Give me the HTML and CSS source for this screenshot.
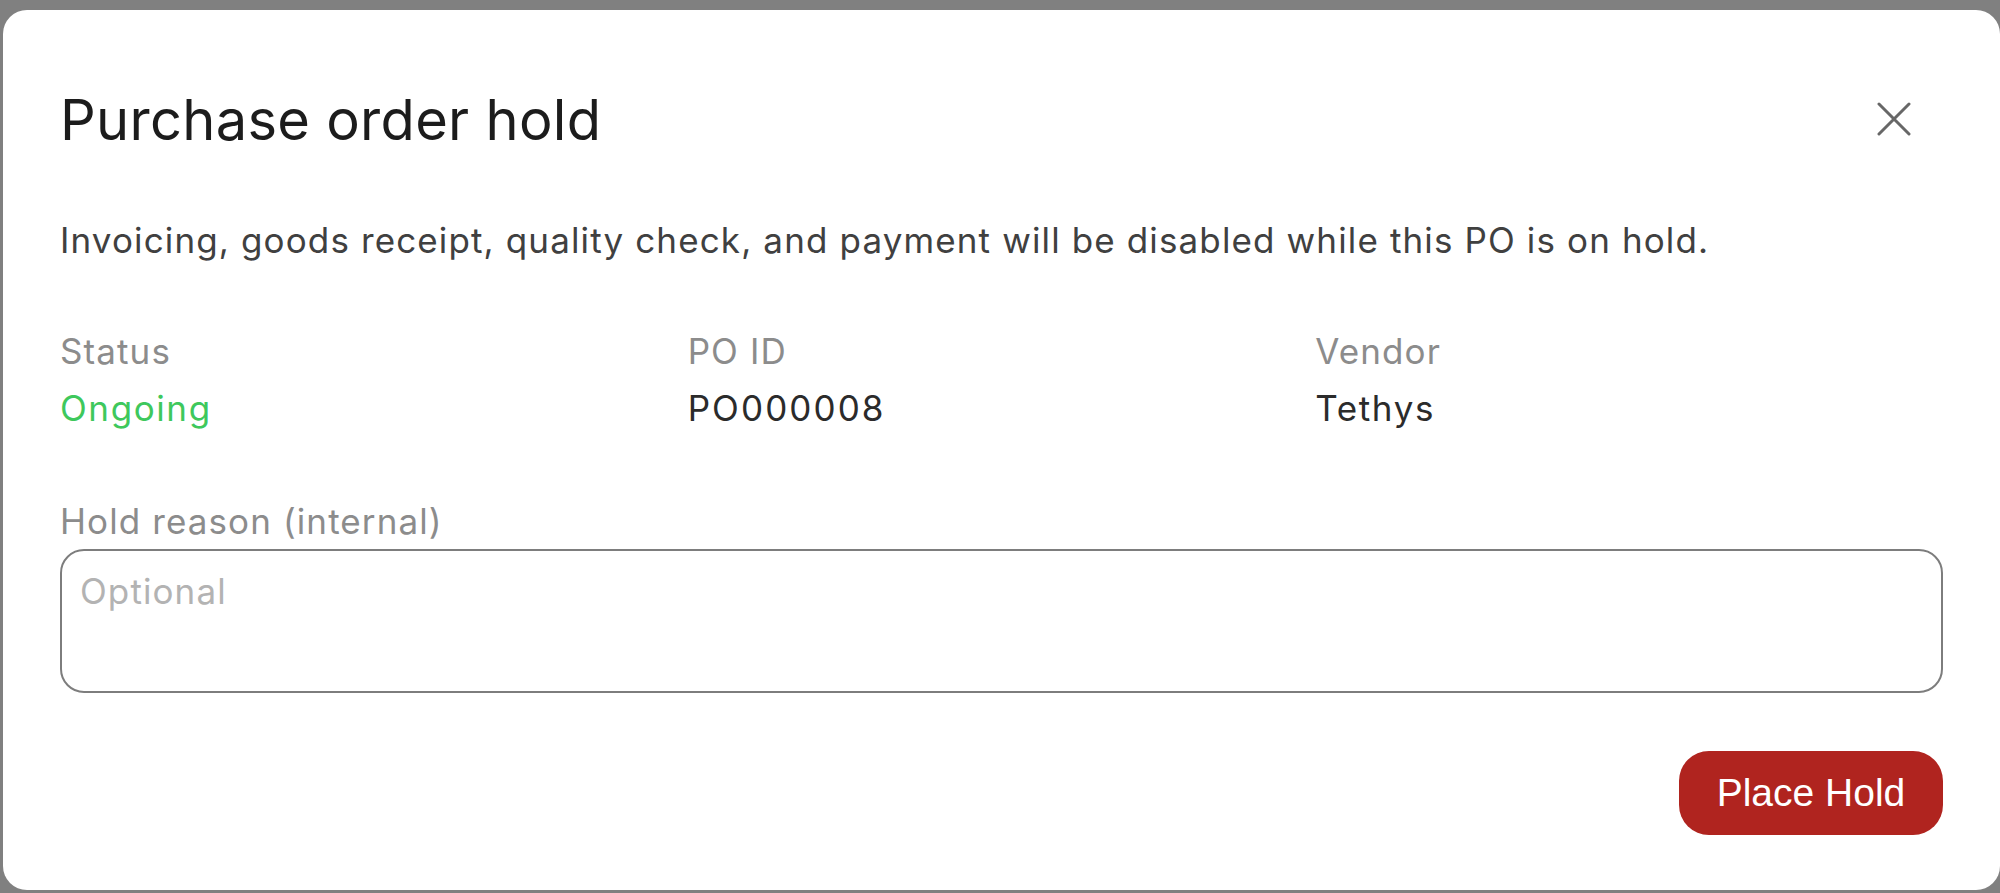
FILE: index.html
```html
<!DOCTYPE html>
<html lang="en">
<head>
<meta charset="utf-8">
<title>Purchase order hold</title>
<link rel="stylesheet" href="styles.css">
</head>
<body>
<div class="modal" role="dialog" aria-labelledby="modal-title">
  <div class="modal-header">
    <h1 class="modal-title" id="modal-title">Purchase order hold</h1>
    <button class="close-btn" type="button" aria-label="Close">
      <svg viewBox="0 0 34 34" width="34" height="34" aria-hidden="true">
        <path d="M2 2 L32 32 M32 2 L2 32" fill="none" stroke="#676767" stroke-width="3" stroke-linecap="round"/>
      </svg>
    </button>
  </div>
  <p class="modal-desc">Invoicing, goods receipt, quality check, and payment will be disabled while this PO is on hold.</p>
  <div class="meta">
    <div class="meta-item">
      <div class="meta-label">Status</div>
      <div class="meta-value status-ongoing">Ongoing</div>
    </div>
    <div class="meta-item">
      <div class="meta-label">PO ID</div>
      <div class="meta-value meta-code">PO000008</div>
    </div>
    <div class="meta-item">
      <div class="meta-label">Vendor</div>
      <div class="meta-value">Tethys</div>
    </div>
  </div>
  <label class="field-label" for="hold-reason">Hold reason (internal)</label>
  <textarea class="field-input" id="hold-reason" placeholder="Optional"></textarea>
  <div class="modal-footer">
    <button class="btn-danger" type="button">Place Hold</button>
  </div>
</div>
</body>
</html>
```

FILE: styles.css
```css
* {
  box-sizing: border-box;
}

html, body {
  margin: 0;
  padding: 0;
}

body {
  width: 2000px;
  height: 893px;
  overflow: hidden;
  background: #808080;
  font-family: Inter, "Noto Sans", sans-serif;
}

.modal {
  margin: 10px 0 0 3px;
  width: 1997px;
  height: 880px;
  background: #ffffff;
  border-radius: 24px;
  padding: 77px 57px 0 57px;
  display: flex;
  flex-direction: column;
}

.modal-header {
  display: flex;
  align-items: center;
  justify-content: space-between;
}

.modal-title {
  margin: 0;
  font-size: 56px;
  line-height: 66px;
  letter-spacing: 0.3px;
  font-weight: 400;
  color: #1c1c1c;
}

.close-btn {
  margin-right: 32px;
  margin-top: -2px;
  width: 34px;
  height: 34px;
  padding: 0;
  border: 0;
  background: transparent;
  display: flex;
  align-items: center;
  justify-content: center;
}

.modal-desc {
  margin: 63px 0 0 0;
  font-size: 35px;
  line-height: 48px;
  letter-spacing: 1.13px;
  color: #404040;
}

.meta {
  margin-top: 63px;
  display: grid;
  grid-template-columns: 1fr 1fr 1fr;
}

.meta-item {
  display: flex;
  flex-direction: column;
  gap: 9px;
}

.meta-label {
  font-size: 35px;
  line-height: 48px;
  letter-spacing: 1.1px;
  color: #8c8c8c;
}

.meta-value {
  font-size: 35px;
  line-height: 48px;
  letter-spacing: 1.6px;
  color: #2b2b2b;
}

.meta-code {
  letter-spacing: 2.1px;
}

.status-ongoing {
  color: #3ec85c;
}

.field-label {
  margin-top: 65px;
  font-size: 35px;
  line-height: 48px;
  letter-spacing: 1.1px;
  color: #8c8c8c;
}

.field-input {
  margin-top: 4px;
  width: 100%;
  height: 144px;
  border: 2px solid #7d7d7d;
  border-radius: 24px;
  padding: 16px 18px;
  font-family: Inter, "Noto Sans", sans-serif;
  font-size: 35px;
  line-height: 48px;
  letter-spacing: 1.1px;
  color: #2b2b2b;
  resize: none;
  outline: none;
}

.field-input::placeholder {
  color: #b3b3b3;
}

.modal-footer {
  margin-top: 58px;
  display: flex;
  justify-content: flex-end;
}

.btn-danger {
  width: 264px;
  height: 84px;
  border: 0;
  border-radius: 30px;
  background: #b0241f;
  color: #ffffff;
  font-family: "Liberation Sans", Arial, sans-serif;
  font-size: 39px;
  padding: 0;
}
```
